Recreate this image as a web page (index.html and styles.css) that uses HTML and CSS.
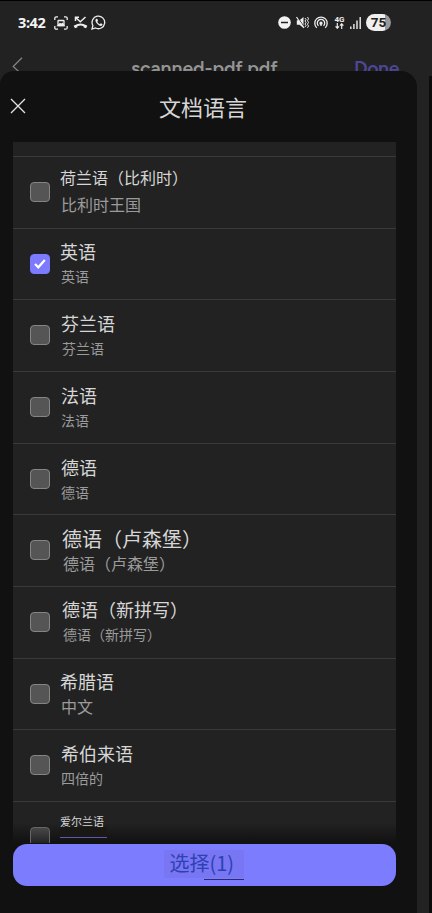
FILE: index.html
```html
<!DOCTYPE html>
<html lang="zh-CN">
<head>
<meta charset="utf-8">
<title>文档语言</title>
<link rel="stylesheet" href="styles.css">
</head>
<body>
<div class="phone">
  <header class="status">
    <div class="status-left">
      <span class="clock">3:42</span>
      <svg class="i-shot" width="14" height="14" viewBox="0 0 14 14" fill="none" stroke="#eee" stroke-width="1.3"><path d="M.8 4V2.300Q.8.8 2.300.8H4M10 .8h1.700q1.500 0 1.500 1.500V4M13.200 10v1.700q0 1.500-1.500 1.500H10M4 13.200H2.300Q.8 13.200.8 11.700V10"/><rect x="4" y="4.500" width="6" height="5" rx=".6"/><path d="M4 9.500l2-2 1.300 1L8.500 7.500l1.500 2z" fill="#eee"/></svg>
      <svg class="i-missed" width="15" height="13" viewBox="0 0 15 13" fill="none" stroke="#eee"><path d="M2.500 5V1.300H6M2.700 1.500 7.300 5.700 12.500 1" stroke-width="1.500"/><path d="M2 10.500Q7.500 6.500 13 10.500" stroke-width="1.800"/><path d="M1.300 11l2.700-1.200M13.700 11l-2.700-1.200" stroke-width="3"/></svg>
      <svg width="15" height="15" viewBox="0 0 15 15"><path d="M1 14l.9-3.500A6.300 6.300 0 1 1 4.500 13z" fill="none" stroke="#eee" stroke-width="1.300"/><path d="M5.200 3.800c-1.500 1-.8 3.200 1.200 5.200s4.200 2.600 5 1c.3-.7.1-.9-.5-1.200l-1.100-.5-.9.900c-1.200-.4-2.200-1.400-2.600-2.500l.7-.9-.6-1.700z" fill="#eee"/></svg>
    </div>
    <div class="status-right">
      <svg width="13" height="13" viewBox="0 0 13 13"><circle cx="6.500" cy="6.500" r="6.300" fill="#f2f2f2"/><path d="M3 6.500h7" stroke="#222" stroke-width="1.500"/></svg>
      <svg class="i-mute" width="13" height="13" viewBox="0 0 13 13"><path d="M.8 4.300h2.700L7.500 1v11L3.500 8.800H.8z" fill="#eee"/><path d="M1.300 .8l7.500 11" stroke="#222" stroke-width="1"/><path d="M.5 1l7.500 11" stroke="#eee" stroke-width="1.200"/><path d="M9 2l1 1.500L9 5l1 1.500L9 8l1 1.500L9 11M11.500 1l1 1.800-1 1.800 1 1.800-1 1.800 1 1.800-1 1.800" fill="none" stroke="#eee"/></svg>
      <svg class="i-hot" width="14" height="13" viewBox="0 0 14 13" fill="none" stroke="#eee" stroke-width="1.300"><path d="M2.800 11.800A6.200 6.200 0 1 1 11.200 11.800M4.500 9.800A3.700 3.700 0 1 1 9.500 9.800"/><circle cx="7" cy="7.200" r="1" fill="#eee"/><path d="M7 7v3"/></svg>
      <span class="net"><span>4G</span><svg width="9" height="6" viewBox="0 0 9 6" fill="none" stroke="#eee" stroke-width="1.200"><path d="M2.300 0v5M.6 3.300l1.700 1.900L4 3.300M6.700 6V1M5 2.700L6.700.8l1.700 1.900"/></svg></span>
      <svg class="i-sig" width="11" height="12" viewBox="0 0 11 12" stroke="#eee" stroke-width="1.400"><path d="M.8 12V9.500M3.900 12V7M7 12V3.500M10.200 12V0"/></svg>
      <span class="battery">75</span>
    </div>
  </header>
  <nav class="nav">
    <svg class="back" width="12" height="18" viewBox="0 0 12 18" fill="none" stroke="#858585" stroke-width="1.200"><path d="M10 .8L1.200 9.500 10 17.500"/></svg>
    <span class="file">scanned-pdf.pdf</span>
    <span class="done">Done</span>
  </nav>
  <div class="stage">
    <main class="sheet">
      <div class="sheet-head">
        <svg width="16" height="16" viewBox="0 0 16 16" stroke="#e4e4e4" stroke-width="1.300"><path d="M1 1l14 14M15 1L1 15"/></svg>
        <h1>文档语言</h1>
      </div>
      <div class="list">
        <div class="row high"><i class="box"></i><div class="text"><p class="name s16">荷兰语（比利时）</p><p class="sub s16">比利时王国</p></div></div>
        <div class="row up"><i class="box on"><svg width="12" height="10" viewBox="0 0 12 10" fill="none" stroke="#fff" stroke-width="2.200"><path d="M1 5l3.300 3.300L10.800 1"/></svg></i><div class="text"><p class="name">英语</p><p class="sub">英语</p></div></div>
        <div class="row in1"><i class="box"></i><div class="text"><p class="name">芬兰语</p><p class="sub">芬兰语</p></div></div>
        <div class="row"><i class="box"></i><div class="text"><p class="name nudge">法语</p><p class="sub">法语</p></div></div>
        <div class="row"><i class="box"></i><div class="text"><p class="name nudge">德语</p><p class="sub">德语</p></div></div>
        <div class="row in2 low"><i class="box"></i><div class="text"><p class="name s20">德语（卢森堡）</p><p class="sub s16">德语（卢森堡）</p></div></div>
        <div class="row in2 up"><i class="box"></i><div class="text"><p class="name">德语（新拼写）</p><p class="sub">德语（新拼写）</p></div></div>
        <div class="row up"><i class="box"></i><div class="text"><p class="name">希腊语</p><p class="sub s16">中文</p></div></div>
        <div class="row"><i class="box"></i><div class="text"><p class="name nudge">希伯来语</p><p class="sub">四倍的</p></div></div>
        <div class="row last"><i class="box"></i><div class="text"><p class="name s11">爱尔兰语</p></div></div>
      </div>
      <button class="choose"><span>选择(1)</span></button>
    </main>
  </div>
</div>
</body>
</html>
```
FILE: styles.css
```css
* { box-sizing: border-box; }
body {
  margin: 0;
  background: #222;
  font-family: "Noto Sans CJK SC", sans-serif;
  color: #d6d6d6;
}
p, h1 { margin: 0; font-weight: 400; }
svg { display: block; flex: none; }
.phone {
  width: 432px;
  height: 913px;
  overflow: hidden;
  border-top: 1px solid #000;
  display: flex;
  flex-direction: column;
}
.status {
  height: 43px;
  flex: none;
  padding: 0 41px 0 18px;
  display: flex;
  justify-content: space-between;
  align-items: center;
}
.status-left, .status-right { display: flex; align-items: center; }
.clock {
  width: 36px;
  font: 700 14.5px/18px "Noto Sans", sans-serif;
  letter-spacing: -.4px;
  color: #f4f4f4;
  padding-bottom: 2px;
}
.i-missed { margin: 0 3px 0 5px; }
.i-mute { margin: 0 5px 0 5px; }
.i-hot { margin-right: 6px; }
.net {
  width: 11px;
  margin-right: 5px;
  display: flex;
  flex-direction: column;
  align-items: center;
  font: 700 8px/7px Roboto, sans-serif;
  color: #eee;
}
.i-sig { margin-right: 5px; }
.battery {
  width: 25px;
  height: 17px;
  border-radius: 9px;
  background: linear-gradient(90deg, #f0f0f0 75%, #999 75%);
  color: #222;
  font: 700 13.5px/17px Roboto, sans-serif;
  text-align: center;
}
.nav {
  height: 27px;
  flex: none;
  padding: 0 30px 0 12px;
  display: flex;
  align-items: flex-start;
  overflow: hidden;
  font: 600 19.5px/24px Figtree, "Noto Sans", sans-serif;
}
.back { margin-top: 13px; }
.file { margin: 12px 0 0 107px; width: 149px; color: #959595; letter-spacing: -.1px; }
.done { margin: 12px 0 0 auto; width: 48px; color: #4d4799; letter-spacing: -.4px; }
.stage {
  flex: 1;
  min-height: 0;
  display: flex;
  background: linear-gradient(90deg, #222 429px, #0c0c0c 429px) 0 5px no-repeat;
}
.sheet {
  width: 417px;
  background: #111;
  border-radius: 14px 16px 0 0;
  padding: 0 21px 0 13px;
  display: flex;
  flex-direction: column;
}
.sheet-head {
  height: 71px;
  flex: none;
  margin-left: -3px;
  display: flex;
  align-items: center;
  padding-bottom: 1px;
}
.sheet-head h1 {
  margin-left: 133px;
  font-size: 22px;
  line-height: 30px;
}
.list {
  height: 701px;
  flex: none;
  overflow: hidden;
  padding-top: 14px;
  background: #222;
}
.row {
  height: 71.67px;
  border-top: 1px solid #393939;
  padding-left: 17px;
  display: flex;
  gap: 11px;
}
.text { padding-top: 11px; }
.in1 { gap: 12px; }
.in2 { gap: 13px; }
.up .text { padding-top: 10px; }
.high .text { padding-top: 8px; }
.low .text { padding-top: 12px; }
.box {
  width: 20px;
  height: 20px;
  flex: none;
  margin: 25px -1px 0 0;
  border: 1px solid #858585;
  border-radius: 4px;
  background: #555;
  display: flex;
  align-items: center;
  justify-content: center;
}
.on { background: #7c7aff; border-color: #7c7aff; }
.name { font-size: 18px; line-height: 24px; }
.sub { font-size: 14px; line-height: 26px; padding-left: 1px; color: #9b9b9b; }
.nudge { padding-left: 1px; }
.s16 { font-size: 16px; }
.s20 { font-size: 20px; }
.high .sub { line-height: 30px; }
.low .sub { line-height: 25px; }
.last {
  height: 42px;
  background: linear-gradient(#222 50%, #111 100%);
}
.last .text { padding-top: 7px; }
.last .box { background: linear-gradient(#484848, #1c1c1c); border-color: #666; }
.name.s11 {
  width: 47px;
  height: 29px;
  font-size: 11px;
  line-height: 24px;
  background: linear-gradient(transparent 18px, #1a1814 18px);
  border-bottom: 1px solid #5c58b0;
}
.choose {
  width: 383px;
  height: 42px;
  flex: none;
  margin: 1px 0 0;
  padding: 0;
  border: 0;
  border-radius: 14px;
  background: #7c7cff;
  display: flex;
  justify-content: center;
  font-family: inherit;
}
.choose span {
  width: 80px;
  height: 36px;
  margin-right: 2px;
  padding-left: 6px;
  background: linear-gradient(#2b2b70, #2b2b70) 100% 100% / 40px 1px no-repeat, linear-gradient(#7876f2, #7876f2) 0 6px / 80px 28px no-repeat;
  color: #2e41b4;
  font-size: 20px;
  line-height: 38px;
  text-align: left;
}
```
